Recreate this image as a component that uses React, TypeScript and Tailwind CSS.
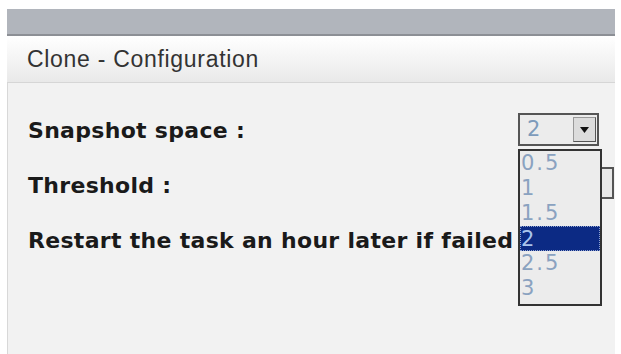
import React from "react";

const items = ["0.5", "1", "1.5", "2", "2.5", "3"];

export default function App() {
  return (
    <div className="w-[621px] h-[354px] bg-white overflow-hidden relative">
      <div className="absolute left-[7px] top-[9px] w-[608px] h-[345px] flex flex-col">
        <div className="h-[27px] bg-[#b1b5bc] border-b-2 border-[#8c8f95] shrink-0" />
        <div className="h-[47px] shrink-0 bg-gradient-to-b from-[#ffffff] to-[#e9e9e9] border-b border-[#d6d6d6] flex items-center pl-[20px]">
          <span className="text-[23px] text-[#333] leading-none tracking-[0.7px]" style={{ fontFamily: '"Liberation Sans", Arial, sans-serif' }}>
            Clone - Configuration
          </span>
        </div>
        <div className="flex-1 bg-[#f2f2f2] border-l border-[#d8d8d8] relative" style={{ fontFamily: '"DejaVu Sans", Verdana, sans-serif' }}>
          <div className="flex flex-col pl-[20px] pt-[36px] gap-[31px] text-[22px] font-bold text-[#1a1a1a] leading-[24px] tracking-[0.3px]">
            <div>Snapshot space :</div>
            <div>Threshold :</div>
            <div>Restart the task an hour later if failed</div>
          </div>
          {/* threshold select behind */}
          <div className="absolute left-[560px] top-[84px] w-[46px] h-[32px] border-2 border-[#555] bg-[#e8e8e8]" />
          {/* snapshot select */}
          <div className="absolute left-[510px] top-[30px] w-[81px] h-[33px] border-2 border-[#555] bg-[#ececec] flex items-center">
            <span className="pl-[7px] text-[21px] text-[#7d9bbb] leading-none flex-1">2</span>
            <div className="w-[23px] h-[25px] mr-[1px] bg-[#dcdcdc] border border-[#999] border-r-[#555] border-b-[#555] flex items-center justify-center">
              <svg width="9" height="6" viewBox="0 0 9 6"><path d="M0 0h9L4.5 6z" fill="#111" /></svg>
            </div>
          </div>
          {/* dropdown list */}
          <div className="absolute left-[510px] top-[66px] w-[84px] h-[157px] border-2 border-[#333] bg-[#ececec] flex flex-col">
            {items.map((it) => (
              <div
                key={it}
                className={
                  it === "2"
                    ? "h-[25px] bg-[#0c2a84] text-[#a9c4ec] text-[21px] leading-[25px] tracking-[2px] pl-0 border border-dotted border-[#8fa3d0]"
                    : "h-[25px] text-[#8aa2c0] text-[21px] leading-[25px] tracking-[2px] pl-[1px]"
                }
              >
                {it}
              </div>
            ))}
          </div>
        </div>
      </div>
    </div>
  );
}
